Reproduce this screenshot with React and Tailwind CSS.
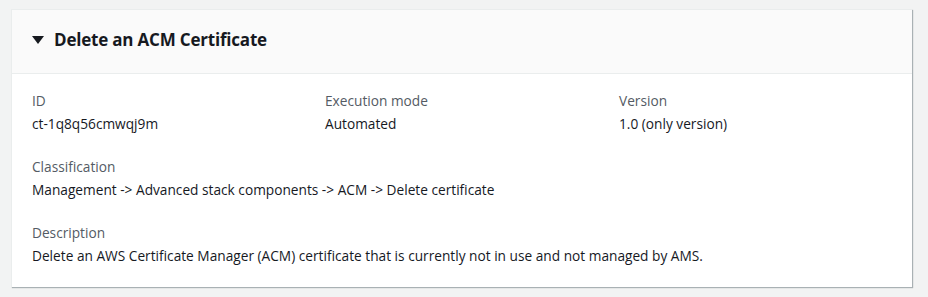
const Field = ({ label, value }) => (
  <div>
    <div className="text-[13.7px] leading-[23px] text-[#545b64]">{label}</div>
    <div className="text-[13.7px] leading-[23px] text-[#16191f]">{value}</div>
  </div>
);

export default function App() {
  return (
    <div
      className="min-h-[297px] w-[928px] bg-[#f2f3f3] pt-[9px] pl-[11px]"
      style={{ fontFamily: '"Open Sans", "Noto Sans", sans-serif' }}
    >
      <div className="w-[901px] border-l border-t border-[#eaeded] bg-white shadow-[1px_1px_1px_0_rgba(0,28,36,0.3)]">
        {/* Header */}
        <div className="flex h-[64px] items-center border-b border-[#eaeded] bg-[#fafafa] pb-[3px] pl-[20px]">
          <svg width="12" height="10" viewBox="0 0 12 10" className="mr-[10px]">
            <polygon points="0,1 12,1 6,9" fill="#16191f" />
          </svg>
          <h2 className="text-[17px] font-bold tracking-[-0.2px] text-[#16191f]">Delete an ACM Certificate</h2>
        </div>

        {/* Body */}
        <div className="px-[20px] pt-[15px] pb-[20px]">
          <div className="grid grid-cols-[293px_294px_1fr]">
            <Field label="ID" value="ct-1q8q56cmwqj9m" />
            <Field label="Execution mode" value="Automated" />
            <Field label="Version" value="1.0 (only version)" />
          </div>
          <div className="mt-[20px]">
            <Field
              label="Classification"
              value="Management -> Advanced stack components -> ACM -> Delete certificate"
            />
          </div>
          <div className="mt-[20px]">
            <Field
              label="Description"
              value="Delete an AWS Certificate Manager (ACM) certificate that is currently not in use and not managed by AMS."
            />
          </div>
        </div>
      </div>
    </div>
  );
}
